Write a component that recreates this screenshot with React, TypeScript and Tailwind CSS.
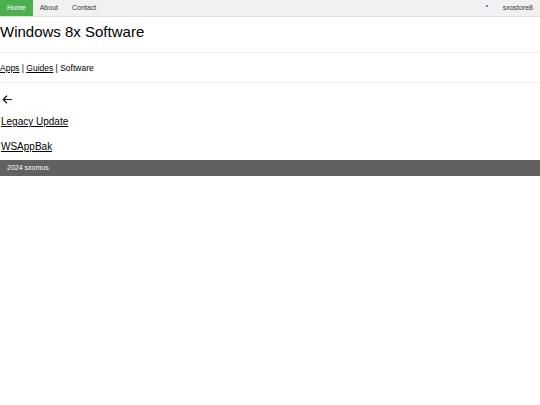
export default function App() {
  return (
    <div className="min-h-[405px] bg-white text-black" style={{ fontFamily: '"Liberation Sans", Arial, sans-serif' }}>
      <nav className="flex h-[17px] items-stretch border-b border-[#e0e0e0] bg-[#f1f1f1] text-[7px] text-[#333]">
        <a className="flex items-center bg-[#4caf50] px-[7px] text-white">Home</a>
        <a className="flex items-center px-[7px]">About</a>
        <a className="flex items-center px-[7px]">Contact</a>
        <div className="ml-auto flex items-center">
          <span className="mr-[8px] mb-[4px] h-[2px] w-[2px] bg-[#4a90d9]" />
          <a className="flex items-center px-[7px]">sxostore8</a>
        </div>
      </nav>
      <h1 className="mt-[5px] text-[15px] leading-[19px]">Windows 8x Software</h1>
      <hr className="mt-[11px] border-[#f0f0f0]" />
      <div className="mt-[9px] text-[8.5px] leading-[12px]">
        <a className="underline">Apps</a> | <a className="underline">Guides</a> | Software
      </div>
      <hr className="mt-[8px] border-[#f0f0f0]" />
      <div className="mt-[10px] pl-[1px]">
        <svg width="13" height="13" viewBox="0 0 24 24" fill="none" stroke="#111" strokeWidth="2.2">
          <path d="M20 12H5M11 5l-7 7 7 7" />
        </svg>
      </div>
      <div className="mt-[9px] pl-[1px] text-[10px] leading-[14px]">
        <a className="underline">Legacy Update</a>
      </div>
      <div className="mt-[11px] pl-[1px] text-[10px] leading-[14px]">
        <a className="underline">WSAppBak</a>
      </div>
      <footer className="mt-[6px] flex h-[16px] items-center bg-[#616161] px-[7px] text-[7px] text-white">
        2024 sxomus
      </footer>
    </div>
  );
}
